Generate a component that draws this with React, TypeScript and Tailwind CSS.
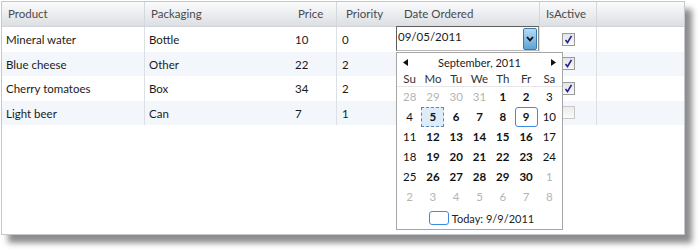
import React from "react";

type Row = { product: string; packaging: string; price: number; priority: number; active: boolean };

const rows: Row[] = [
    { product: "Mineral water", packaging: "Bottle", price: 10, priority: 0, active: true },
    { product: "Blue cheese", packaging: "Other", price: 22, priority: 2, active: true },
    { product: "Cherry tomatoes", packaging: "Box", price: 34, priority: 2, active: true },
    { product: "Light beer", packaging: "Can", price: 7, priority: 1, active: false },
];

// muted = other month, bold = weekday of the current month
type Day = { d: number; muted?: boolean; bold?: boolean; mark?: "focus" | "today" };

const weeks: Day[][] = [
    [{ d: 28, muted: true }, { d: 29, muted: true }, { d: 30, muted: true }, { d: 31, muted: true }, { d: 1, bold: true }, { d: 2, bold: true }, { d: 3 }],
    [{ d: 4 }, { d: 5, bold: true, mark: "focus" }, { d: 6, bold: true }, { d: 7, bold: true }, { d: 8, bold: true }, { d: 9, bold: true, mark: "today" }, { d: 10 }],
    [{ d: 11 }, { d: 12, bold: true }, { d: 13, bold: true }, { d: 14, bold: true }, { d: 15, bold: true }, { d: 16, bold: true }, { d: 17 }],
    [{ d: 18 }, { d: 19, bold: true }, { d: 20, bold: true }, { d: 21, bold: true }, { d: 22, bold: true }, { d: 23, bold: true }, { d: 24 }],
    [{ d: 25 }, { d: 26, bold: true }, { d: 27, bold: true }, { d: 28, bold: true }, { d: 29, bold: true }, { d: 30, bold: true }, { d: 1, muted: true }],
    [{ d: 2, muted: true }, { d: 3, muted: true }, { d: 4, muted: true }, { d: 5, muted: true }, { d: 6, muted: true }, { d: 7, muted: true }, { d: 8, muted: true }],
];

function CheckBox({ checked }: { checked: boolean }) {
    return (
        <div
            className={`w-[13px] h-[13px] border flex items-center justify-center ${checked
                ? "border-[#9a9a9a] bg-linear-to-b from-[#e4e4e4] to-[#f8f8f8]"
                : "border-[#c8c8c8] bg-linear-to-b from-[#ececec] to-[#fafafa]"
                }`}
        >
            {checked && (
                <svg width="9" height="9" viewBox="0 0 9 9">
                    <path d="M1.5 5 L3.5 7.5 L7.5 0.8" fill="none" stroke="#22238f" strokeWidth="1.6" />
                </svg>
            )}
        </div>
    );
}

function Calendar() {
    return (
        <div className="absolute left-[394px] top-[50px] w-[167px] h-[178px] bg-white border border-[#a6a6a6] flex flex-col text-[11.5px]">
            {/* Month header */}
            <div className="h-[18px] flex items-center justify-between px-[6px] text-[#222]">
                <svg width="5" height="7" viewBox="0 0 5 7"><path d="M5 0 L0 3.5 L5 7 Z" fill="#111" /></svg>
                <span className="leading-none text-[11px]">September, 2011</span>
                <svg width="5" height="7" viewBox="0 0 5 7"><path d="M0 0 L5 3.5 L0 7 Z" fill="#111" /></svg>
            </div>

            {/* Day names */}
            <div className="h-[16px] grid grid-cols-7 px-[1px] text-[#333] border-b border-[#e6e6e6]">
                {["Su", "Mo", "Tu", "We", "Th", "Fr", "Sa"].map((n) => (
                    <div key={n} className="flex items-center justify-center leading-none">{n}</div>
                ))}
            </div>

            {/* Dates */}
            <div className="flex flex-col px-[1px]">
                {weeks.map((w, i) => (
                    <div key={i} className="grid grid-cols-7 h-[20px]">
                        {w.map((day, j) => (
                            <div key={j} className="flex items-center justify-center">
                                <div
                                    className={`w-[23px] h-[20px] flex items-center justify-center leading-none
                                        ${day.muted ? "text-[#b4b4b4]" : "text-[#111]"}
                                        ${day.bold ? "font-bold" : ""}
                                        ${day.mark === "focus" ? "border border-dashed border-[#5a86b0] bg-[#dcecfb] text-[#1c6fd1]" : ""}
                                        ${day.mark === "today" ? "border border-[#3d8be0] rounded-[3px] w-[22px] text-[#1c6fd1]" : ""}`}
                                >
                                    {day.d}
                                </div>
                            </div>
                        ))}
                    </div>
                ))}
            </div>

            {/* Today */}
            <div className="flex-1 flex items-center justify-center gap-[3px] pl-[4px]">
                <div className="w-[20px] h-[14px] rounded-[3px] border border-[#3d8be0]" />
                <span className="text-[#222] leading-none text-[11px]">Today: 9/9/2011</span>
            </div>
        </div>
    );
}

export default function App() {
    return (
        <div className="w-[700px] h-[251px] bg-white pl-[1px] pt-[1px]" style={{ fontFamily: "Lato, 'Noto Sans', sans-serif" }}>
            <div className="relative w-[684px] h-[234px] bg-white border border-[#c4c8ce] shadow-[7px_8px_6px_rgba(0,0,0,0.45)] text-[11.5px]">
                {/* Header */}
                <div className="flex h-[25px] bg-linear-to-b from-[#fbfbfc] to-[#dcdfe3] border-b border-[#d0d4d9] text-[#4a4a4a]">
                    <div className="w-[143px] flex items-center pl-[6px] border-r border-[#d4d7db]">Product</div>
                    <div className="w-[146px] flex items-center pl-[6px]">Packaging</div>
                    <div className="w-[46px] flex items-center pl-[7px] border-r border-[#d4d7db]">Price</div>
                    <div className="w-[58px] flex items-center pl-[9px]">Priority</div>
                    <div className="w-[145px] flex items-center pl-[9px] border-r border-[#d4d7db]">Date Ordered</div>
                    <div className="w-[57px] flex items-center pl-[6px] border-r border-[#d4d7db]">IsActive</div>
                    <div className="flex-1" />
                </div>

                {/* Rows */}
                {rows.map((r, i) => (
                    <div key={r.product} className={`flex h-[24.5px] text-[#1b1b1b] ${i % 2 ? "bg-[#f3f7fb]" : "bg-white"}`}>
                        <div className="w-[143px] flex items-center pl-[4px] pt-[1px] border-r border-[#dcdfe3]">{r.product}</div>
                        <div className="w-[146px] flex items-center pl-[4px] pt-[1px]">{r.packaging}</div>
                        <div className="w-[46px] flex items-center pl-[4px] pt-[1px] border-r border-[#dcdfe3]">{r.price}</div>
                        <div className="w-[58px] flex items-center pl-[5px] pt-[1px]">{r.priority}</div>
                        <div className="w-[145px] flex items-center border-r border-[#dcdfe3]">
                            {i === 0 && (
                                <div className="ml-[1px] w-[145px] h-[25px] -mt-[1px] bg-white border border-[#5d5d5d] border-b-[#b8b8b8] border-r-[#8a8a8a] flex items-center justify-between pl-[1px] pr-[1px]">
                                    <span className="-mt-[4px]">09/05/2011</span>
                                    <div className="w-[14px] h-[22px] rounded-[2px] border border-[#3b78a8] bg-linear-to-b from-[#b5dbf6] to-[#5ea2d6] flex items-center justify-center">
                                        <svg width="8" height="6" viewBox="0 0 8 6">
                                            <path d="M1 1 L4 4.3 L7 1" fill="none" stroke="#111" strokeWidth="1.8" />
                                        </svg>
                                    </div>
                                </div>
                            )}
                        </div>
                        <div className="w-[57px] flex items-center justify-center border-r border-[#dcdfe3]">
                            <CheckBox checked={r.active} />
                        </div>
                        <div className="flex-1" />
                    </div>
                ))}

                <Calendar />
            </div>
        </div>
    );
}
